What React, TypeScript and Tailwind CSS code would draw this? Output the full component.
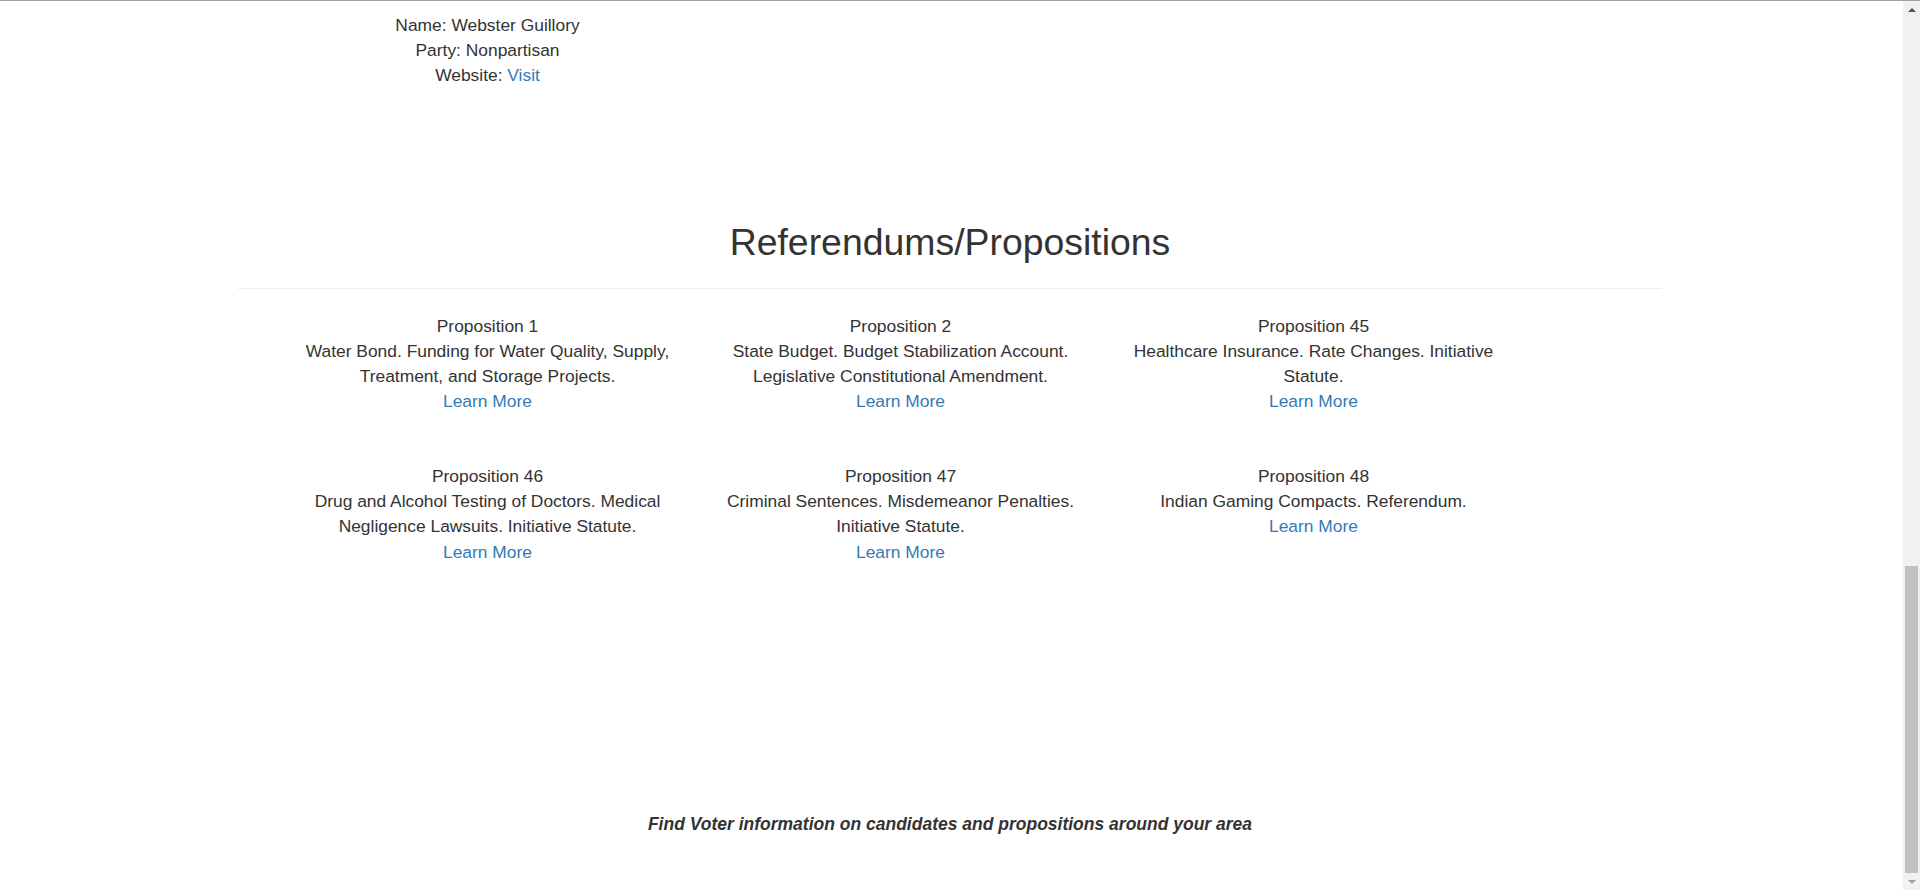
const propositions = [
    {
        id: 1,
        title: "Proposition 1",
        info: "Water Bond. Funding for Water Quality, Supply, Treatment, and Storage Projects.",
    },
    {
        id: 2,
        title: "Proposition 2",
        info: "State Budget. Budget Stabilization Account. Legislative Constitutional Amendment.",
    },
    {
        id: 45,
        title: "Proposition 45",
        info: "Healthcare Insurance. Rate Changes. Initiative Statute.",
    },
    {
        id: 46,
        title: "Proposition 46",
        info: "Drug and Alcohol Testing of Doctors. Medical Negligence Lawsuits. Initiative Statute.",
    },
    {
        id: 47,
        title: "Proposition 47",
        info: "Criminal Sentences. Misdemeanor Penalties. Initiative Statute.",
    },
    {
        id: 48,
        title: "Proposition 48",
        info: "Indian Gaming Compacts. Referendum.",
    },
];

export default function App() {
    return (
        <div className="flex h-[890px] overflow-hidden border-t border-[#a0a0a0] bg-white font-['Liberation_Sans',Arial,sans-serif] text-[17.4px] leading-[25.1px] text-[#333333]">
            <main className="flex-1">
                <div className="ml-[238px] w-[1424px]">
                    {/* Candidate info */}
                    <div className="grid grid-cols-[repeat(3,413px)] pl-[43px] pt-[11.5px]">
                        <div className="px-[15px] text-center">
                            <p>Name: Webster Guillory</p>
                            <p>Party: Nonpartisan</p>
                            <p>
                                Website: <a href="#" className="text-[#337ab7]">Visit</a>
                            </p>
                        </div>
                    </div>

                    {/* Referendums */}
                    <h1 className="mt-[134px] text-center text-[37.4px] leading-[1.1] font-normal">
                        Referendums/Propositions
                    </h1>
                    <hr className="mt-[25px] border-t border-[#eeeeee]" />

                    <div className="mt-[25px] grid grid-cols-[repeat(3,413px)] gap-y-[50px] pl-[43px]">
                        {propositions.map((prop) => (
                            <div key={prop.id} className="px-[15px] text-center">
                                <p>{prop.title}</p>
                                <p>{prop.info}</p>
                                <a href="#" className="text-[#337ab7]">
                                    Learn More
                                </a>
                            </div>
                        ))}
                    </div>

                    {/* Footer */}
                    <p className="mt-[247px] text-center text-[17.5px] font-bold italic">
                        Find Voter information on candidates and propositions around your area
                    </p>
                </div>
            </main>

            {/* Scrollbar */}
            <aside className="flex w-[17px] flex-col bg-[#f1f1f1]">
                <div className="flex h-[17px] items-center justify-center">
                    <div className="h-0 w-0 border-x-[4px] border-b-[4px] border-x-transparent border-b-[#505050]" />
                </div>
                <div className="flex-1" />
                <div className="mx-[2px] h-[307px] bg-[#c1c1c1]" />
                <div className="flex h-[17px] items-center justify-center">
                    <div className="h-0 w-0 border-x-[4px] border-t-[4px] border-x-transparent border-t-[#a3a3a3]" />
                </div>
            </aside>
        </div>
    );
}
